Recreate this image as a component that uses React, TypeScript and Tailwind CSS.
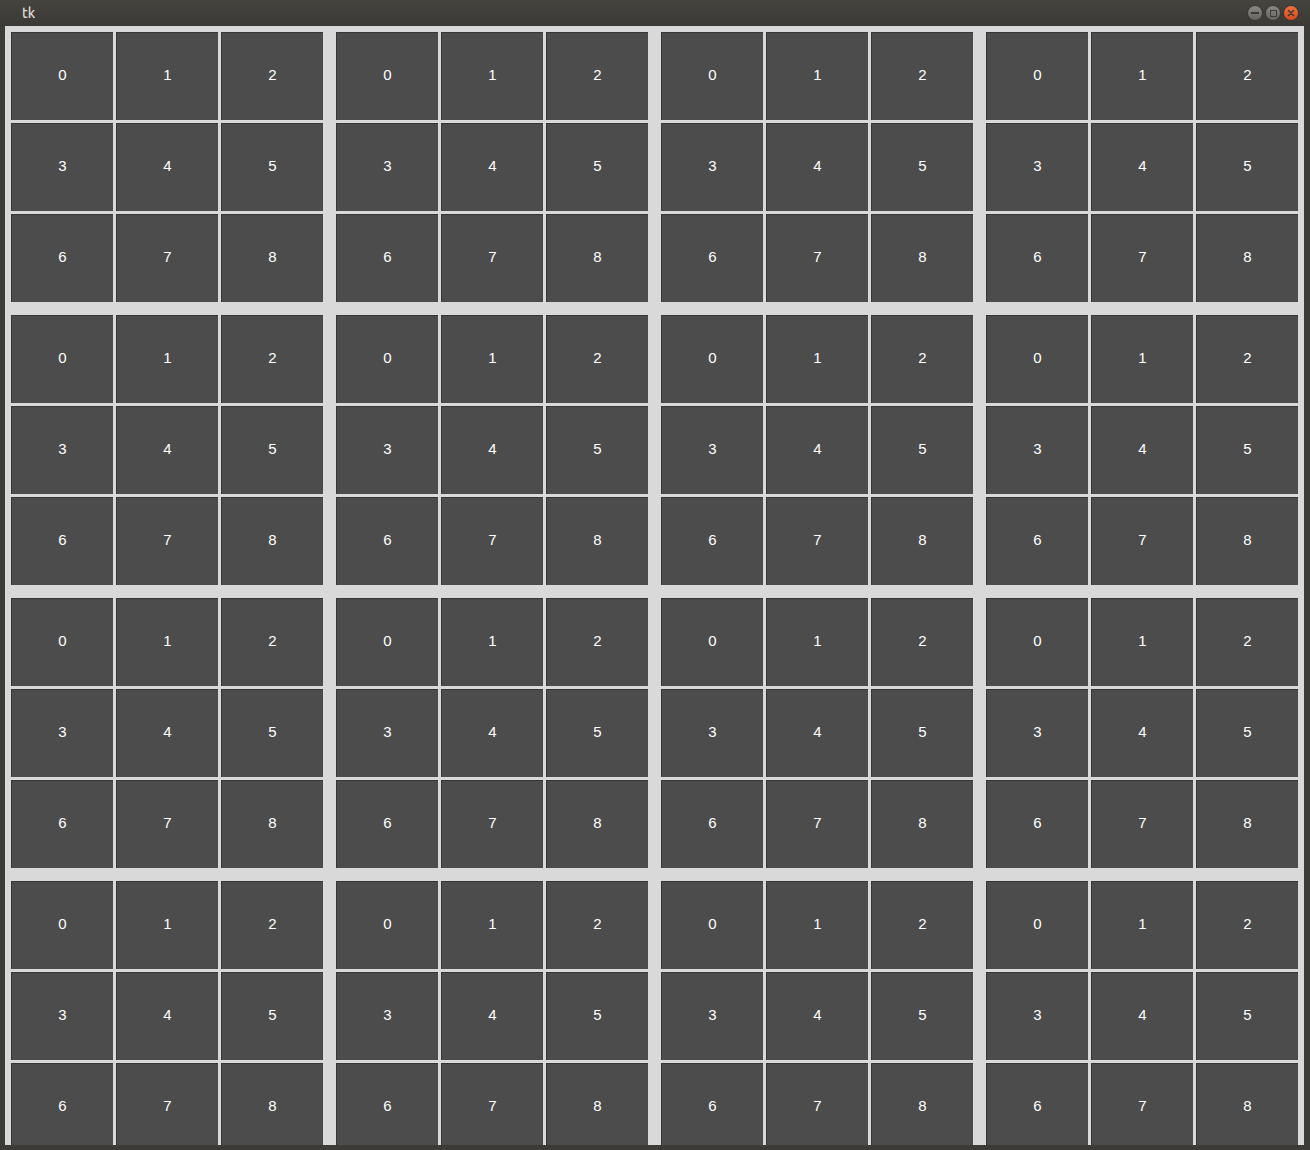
import React from 'react';

const cells = [0, 1, 2, 3, 4, 5, 6, 7, 8];

const Block = () => (
  <div className="grid grid-cols-[repeat(3,102px)] grid-rows-[repeat(3,88px)] gap-[3px]">
    {cells.map((n) => (
      <div
        key={n}
        className="flex items-center justify-center pb-[3px] bg-[#4c4c4c] border-t border-l border-[#363636] text-[15px] text-white font-['Liberation_Sans',sans-serif]"
      >
        {n}
      </div>
    ))}
  </div>
);

const TitleBar = () => (
  <div className="h-[26px] flex items-center justify-between bg-gradient-to-b from-[#45443f] to-[#3a3935] pl-[22px] pr-[11px]">
    <span className="text-[14px] text-[#dfdbd2] font-['Ubuntu','DejaVu_Sans',sans-serif] font-medium">tk</span>
    <div className="flex items-center gap-[2px]">
      <div className="w-[16px] h-[16px] rounded-full bg-gradient-to-b from-[#8a8983] to-[#65645f] border border-[#3a3935] flex items-center justify-center">
        <div className="w-[8px] h-[2px] bg-[#3c3b37]" />
      </div>
      <div className="w-[16px] h-[16px] rounded-full bg-gradient-to-b from-[#8a8983] to-[#65645f] border border-[#3a3935] flex items-center justify-center">
        <div className="w-[7px] h-[7px] border-[1.5px] border-[#3c3b37]" />
      </div>
      <div className="w-[16px] h-[16px] rounded-full bg-gradient-to-b from-[#f0723f] to-[#d94a17] border border-[#3a3935] flex items-center justify-center">
        <svg width="8" height="8" viewBox="0 0 8 8">
          <path d="M1.5 1.5 L6.5 6.5 M6.5 1.5 L1.5 6.5" stroke="#3c3b37" strokeWidth="1.6" strokeLinecap="round" />
        </svg>
      </div>
    </div>
  </div>
);

export default function App() {
  return (
    <div className="w-[1310px] h-[1150px] bg-[#3c3b37] flex flex-col overflow-hidden font-['DejaVu_Sans',sans-serif]">
      <TitleBar />
      <div className="mx-[5px] mr-[6px] h-[1119px] bg-[#d9d9d9] overflow-hidden">
        <div className="grid grid-cols-[repeat(4,312px)] gap-[13px] pt-[6px] pl-[6px]">
          {Array.from({ length: 16 }).map((_, i) => (
            <Block key={i} />
          ))}
        </div>
      </div>
    </div>
  );
}
